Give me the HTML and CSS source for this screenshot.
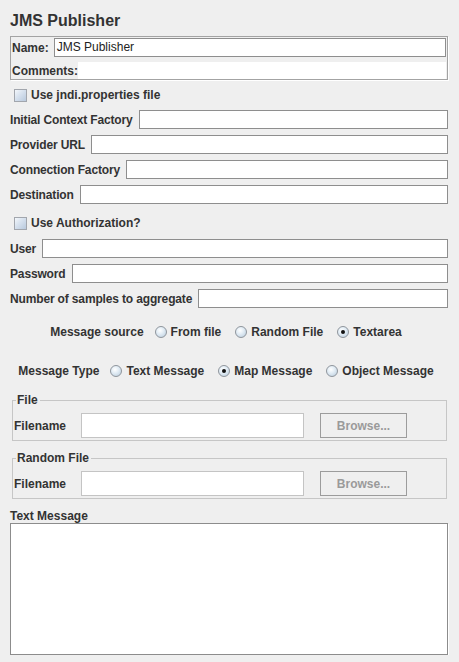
FILE: index.html
```html
<!DOCTYPE html>
<html lang="en">
<head>
<meta charset="utf-8">
<title>JMS Publisher</title>
<link rel="stylesheet" href="styles.css">
</head>
<body>
<div class="page">
  <div class="title">JMS Publisher</div>

  <div class="name-panel">
    <div class="name-row">
      <span class="lbl">Name:</span>
      <div class="field name-field">JMS Publisher</div>
    </div>
    <div class="comments-row">
      <span class="lbl">Comments:</span>
      <div class="comments-area"></div>
    </div>
  </div>

  <div class="check-row check-jndi">
    <span class="cbox"></span>
    <span class="lbl">Use jndi.properties file</span>
  </div>

  <div class="frow frow-first">
    <span class="lbl">Initial Context Factory</span>
    <div class="field"></div>
  </div>
  <div class="frow">
    <span class="lbl">Provider URL</span>
    <div class="field"></div>
  </div>
  <div class="frow">
    <span class="lbl">Connection Factory</span>
    <div class="field"></div>
  </div>
  <div class="frow">
    <span class="lbl">Destination</span>
    <div class="field"></div>
  </div>

  <div class="check-row check-auth">
    <span class="cbox"></span>
    <span class="lbl">Use Authorization?</span>
  </div>

  <div class="frow frow-user">
    <span class="lbl">User</span>
    <div class="field"></div>
  </div>
  <div class="frow">
    <span class="lbl">Password</span>
    <div class="field"></div>
  </div>
  <div class="frow">
    <span class="lbl">Number of samples to aggregate</span>
    <div class="field"></div>
  </div>

  <div class="radio-row row-source">
    <span class="lbl group-lbl">Message source</span>
    <span class="ritem"><span class="radio"></span><span class="lbl">From file</span></span>
    <span class="ritem"><span class="radio"></span><span class="lbl">Random File</span></span>
    <span class="ritem"><span class="radio on"></span><span class="lbl">Textarea</span></span>
  </div>

  <div class="radio-row row-type">
    <span class="lbl group-lbl">Message Type</span>
    <span class="ritem"><span class="radio"></span><span class="lbl">Text Message</span></span>
    <span class="ritem"><span class="radio on"></span><span class="lbl">Map Message</span></span>
    <span class="ritem"><span class="radio"></span><span class="lbl">Object Message</span></span>
  </div>

  <fieldset class="box box-file">
    <legend class="box-title">File</legend>
    <div class="file-row">
      <span class="lbl file-lbl">Filename</span>
      <div class="file-field"></div>
      <div class="btn">Browse...</div>
    </div>
  </fieldset>

  <fieldset class="box box-random">
    <legend class="box-title">Random File</legend>
    <div class="file-row">
      <span class="lbl file-lbl">Filename</span>
      <div class="file-field"></div>
      <div class="btn">Browse...</div>
    </div>
  </fieldset>

  <div class="ta-label lbl">Text Message</div>
  <div class="textarea"></div>
</div>
</body>
</html>
```

FILE: styles.css
```css
html, body {
  margin: 0;
  padding: 0;
  background: #efefef;
}

body {
  font-family: "Liberation Sans", Arial, sans-serif;
  font-size: 12px;
  color: #333333;
}

.page {
  padding: 11px 11px 0 10px;
}

.lbl {
  font-weight: bold;
  white-space: nowrap;
  line-height: 14px;
}

.title {
  font-size: 16px;
  font-weight: bold;
  line-height: 20px;
  height: 20px;
}

/* Name / comments panel */
.name-panel {
  margin-top: 5px;
  border: 1px solid #a3a3a3;
  box-shadow: 1px 1px 0 #ffffff;
  padding: 1px 1px 0 1px;
}

.name-row {
  display: flex;
  align-items: center;
  height: 19px;
}

.name-field {
  margin-left: 5px;
  padding-left: 2px;
  font-weight: normal;
  color: #222;
  line-height: 17px;
}

.comments-row {
  display: flex;
  align-items: center;
  height: 17px;
  margin-top: 5px;
}

.comments-area {
  flex: 1;
  height: 17px;
  background: #ffffff;
}

/* generic text field */
.field {
  flex: 1;
  height: 19px;
  box-sizing: border-box;
  border: 1px solid #8e8e8e;
  background: #ffffff;
}

/* checkbox rows */
.check-row {
  display: flex;
  align-items: center;
  height: 20px;
  padding-left: 4px;
}

.check-jndi {
  margin-top: 5px;
}

.check-auth {
  margin-top: 9px;
}

.cbox {
  width: 13px;
  height: 13px;
  box-sizing: border-box;
  border: 1px solid #a2a6ad;
  background: linear-gradient(135deg, #f4f7fb 0%, #d6e1ee 45%, #b9c9dd 100%);
  margin-right: 4px;
}

/* label + field rows */
.frow {
  display: flex;
  align-items: center;
  height: 19px;
  margin-top: 6px;
}

.frow .lbl {
  letter-spacing: -0.15px;
}

.frow-first {
  margin-top: 5px;
}

.frow-user {
  margin-top: 6px;
}

.frow .field {
  margin-left: 6px;
}

/* radio rows */
.radio-row {
  display: flex;
  justify-content: center;
  align-items: center;
  height: 20px;
  padding-right: 6px;
}

.row-source {
  margin-top: 14px;
}

.row-type {
  margin-top: 19px;
}

.group-lbl {
  margin-right: 11px;
}

.ritem {
  display: flex;
  align-items: center;
}

.ritem + .ritem {
  margin-left: 14px;
}

.radio {
  position: relative;
  width: 12px;
  height: 12px;
  box-sizing: border-box;
  border-radius: 50%;
  border: 1px solid #8f959c;
  background: radial-gradient(circle at 40% 35%, #ffffff 0%, #e3edf5 40%, #b7cadb 100%);
  margin-right: 4px;
}

.radio.on::after {
  content: "";
  position: absolute;
  left: 3px;
  top: 3px;
  width: 4px;
  height: 4px;
  border-radius: 50%;
  background: #111111;
}

/* titled boxes */
.box {
  margin: 12px 1px 0 2px;
  padding: 6px 0 2px 1px;
  border: 1px solid #c6c6c6;
  min-width: 0;
}

.box-random {
  margin-top: 10px;
}

.box-title {
  font-weight: bold;
  line-height: 14px;
  padding: 0 2px 0 1px;
  margin-left: 2px;
  color: #333333;
}

.file-row {
  display: flex;
  align-items: center;
  height: 25px;
}

.file-lbl {
  width: 67px;
}

.file-field {
  width: 223px;
  height: 25px;
  box-sizing: border-box;
  border: 1px solid #c4c4c4;
  background: #ffffff;
}

.btn {
  margin-left: 16px;
  width: 87px;
  height: 25px;
  box-sizing: border-box;
  border: 1px solid #9c9c9c;
  background: #efefef;
  color: #9a9a9a;
  font-weight: bold;
  display: flex;
  align-items: center;
  justify-content: center;
}

/* text message area */
.ta-label {
  margin-top: 10px;
  height: 14px;
}

.textarea {
  height: 132px;
  box-sizing: border-box;
  border: 1px solid #8c8c8c;
  box-shadow: 1px 1px 0 #ffffff;
  background: #ffffff;
}
```
